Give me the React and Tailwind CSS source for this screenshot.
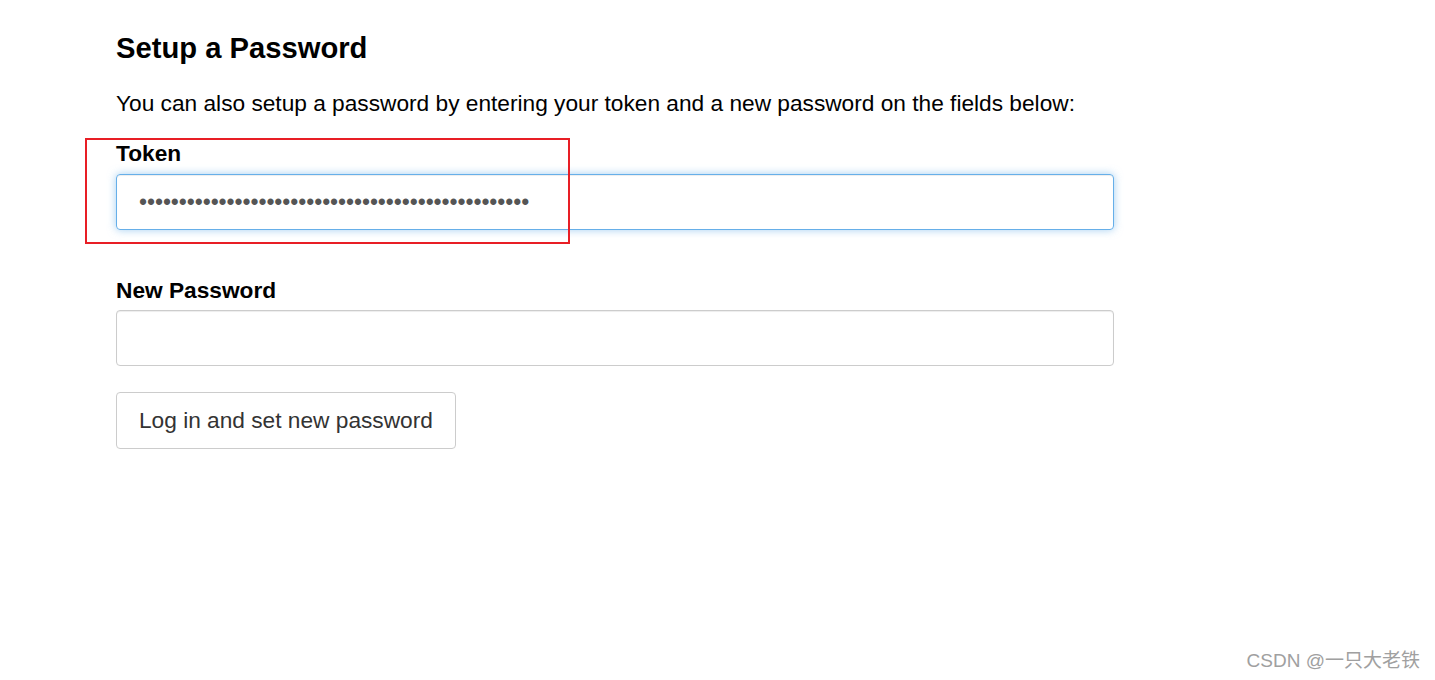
import React from 'react';

const font = "font-['Liberation_Sans',Arial,'Noto_Sans_CJK_SC',sans-serif]";

const SetupPassword = () => {
  const dots = '•'.repeat(49);

  return (
    <div className={`relative min-h-[680px] bg-white text-black ${font}`}>
      <div className="ml-[116px] w-[998px] pt-[32px]">
        <h3 className="text-[29.2px] font-bold leading-[32px]">Setup a Password</h3>
        <p className="mt-[24px] text-[22.7px] leading-[30px]">
          You can also setup a password by entering your token and a new password on the fields below:
        </p>

        <label className="mt-[20px] block text-[22.7px] font-bold leading-[30px]">Token</label>
        <div className="mt-[6px] flex h-[56px] items-center rounded-[4px] border border-[#66afe9] px-[22px] shadow-[inset_0_1px_1px_rgba(0,0,0,0.075),0_0_8px_rgba(102,175,233,0.6)]">
          <span className="text-[23px] leading-none tracking-[-0.09px] text-[#555]">{dots}</span>
        </div>

        <label className="mt-[45px] block text-[22.7px] font-bold leading-[30px]">New Password</label>
        <div className="mt-[5px] h-[56px] rounded-[4px] border border-[#ccc] shadow-[inset_0_1px_1px_rgba(0,0,0,0.075)]" />

        <button className="mt-[26px] h-[57px] rounded-[4px] border border-[#ccc] bg-white px-[22px] text-[22.7px] text-[#333]">
          Log in and set new password
        </button>
      </div>

      {/* red annotation box */}
      <div className="absolute left-[85px] top-[138px] h-[106px] w-[485px] border-2 border-[#e81e25]" />

      <div className="absolute right-[15px] top-[648px] text-[19px] leading-[26px] text-[#a0a0a0]">
        CSDN @一只大老铁
      </div>
    </div>
  );
};

export default function App() {
  return <SetupPassword />;
}
